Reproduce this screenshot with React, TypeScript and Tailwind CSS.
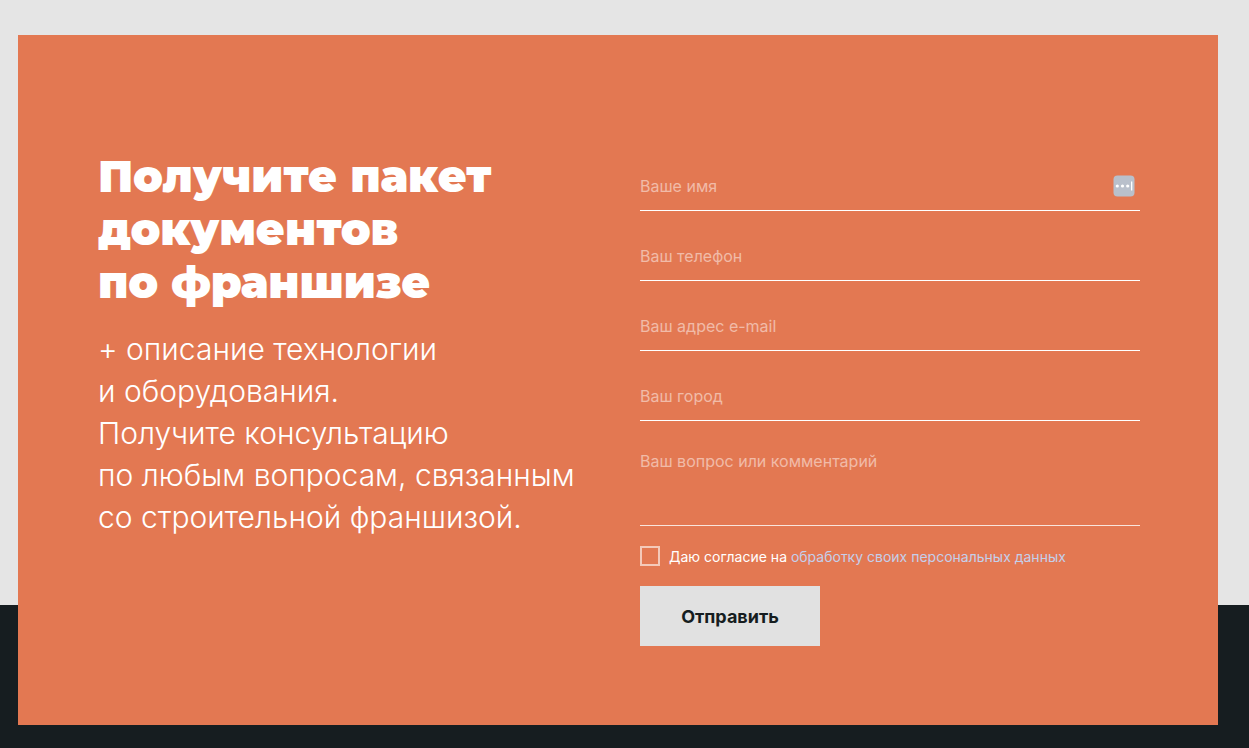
import React from 'react';

const fields = [
  { id: 'name', label: 'Ваше имя', type: 'text' },
  { id: 'phone', label: 'Ваш телефон', type: 'tel' },
  { id: 'email', label: 'Ваш адрес e-mail', type: 'email' },
  { id: 'city', label: 'Ваш город', type: 'text' },
];

function AutofillIcon() {
  return (
    <svg className="pointer-events-none absolute right-1 bottom-[13px] size-6" viewBox="0 0 24 24" aria-hidden="true">
      <rect x="1.5" y="1.5" width="21" height="21" rx="4" fill="#b9c0cb" />
      <circle cx="5.3" cy="12" r="1.6" fill="#fff" />
      <circle cx="10.5" cy="12" r="1.6" fill="#fff" />
      <circle cx="15.7" cy="12" r="1.6" fill="#fff" />
      <rect x="19" y="7.5" width="1.3" height="9" fill="#fff" />
    </svg>
  );
}

export default function App() {
  return (
    <main className="min-h-screen bg-[linear-gradient(to_bottom,#e5e5e5_605px,#161d20_605px)] pt-[35px] pr-[31px] pb-[23px] pl-[18px] font-['Inter','Liberation_Sans',sans-serif]">
      <section className="grid gap-x-[42px] gap-y-10 bg-[#e37852] px-6 pt-[115px] pb-[79px] text-white lg:grid-cols-2 lg:pr-[78px] lg:pl-[80px]">
        <div>
          <h1 className="font-['Montserrat','Inter',sans-serif] text-[44px] leading-[53px] font-black">
            Получите пакет<br />документов<br />по франшизе
          </h1>
          <p className="mt-[19px] text-[30px] leading-[42px] font-light lg:whitespace-nowrap">
            + описание технологии<br />и оборудования.<br />Получите консультацию<br />по любым вопросам, связанным<br />со строительной франшизой.
          </p>
        </div>
        <form className="pt-px" onSubmit={(e) => e.preventDefault()}>
          <div className="flex flex-col gap-[10px]">
            {fields.map((f) => (
              <div key={f.id} className="relative">
                <input id={f.id} type={f.type} aria-label={f.label} placeholder={f.label} className="block h-[60px] w-full border-b border-white bg-transparent pt-[10px] text-base outline-none placeholder:text-white/50" />
                {f.id === 'name' && <AutofillIcon />}
              </div>
            ))}
            <textarea id="comment" aria-label="Ваш вопрос или комментарий" placeholder="Ваш вопрос или комментарий" className="block h-[95px] w-full resize-none border-b border-white/80 bg-transparent pt-[18px] text-base leading-6 outline-none placeholder:text-white/50" />
          </div>
          <div className="mt-5 flex items-start gap-[9px] text-[14px] leading-[22px] lg:h-5">
            <input id="consent" type="checkbox" className="size-5 shrink-0 appearance-none border-2 border-white/60 checked:bg-white" />
            <label htmlFor="consent">Даю согласие на <a href="#privacy" className="text-[#c5cfea]">обработку своих персональных данных</a></label>
          </div>
          <button type="submit" className="mt-5 h-[60px] w-[180px] bg-[#e1e1e1] text-[18px] leading-[27px] font-bold text-[#161d20]">Отправить</button>
        </form>
      </section>
    </main>
  );
}
